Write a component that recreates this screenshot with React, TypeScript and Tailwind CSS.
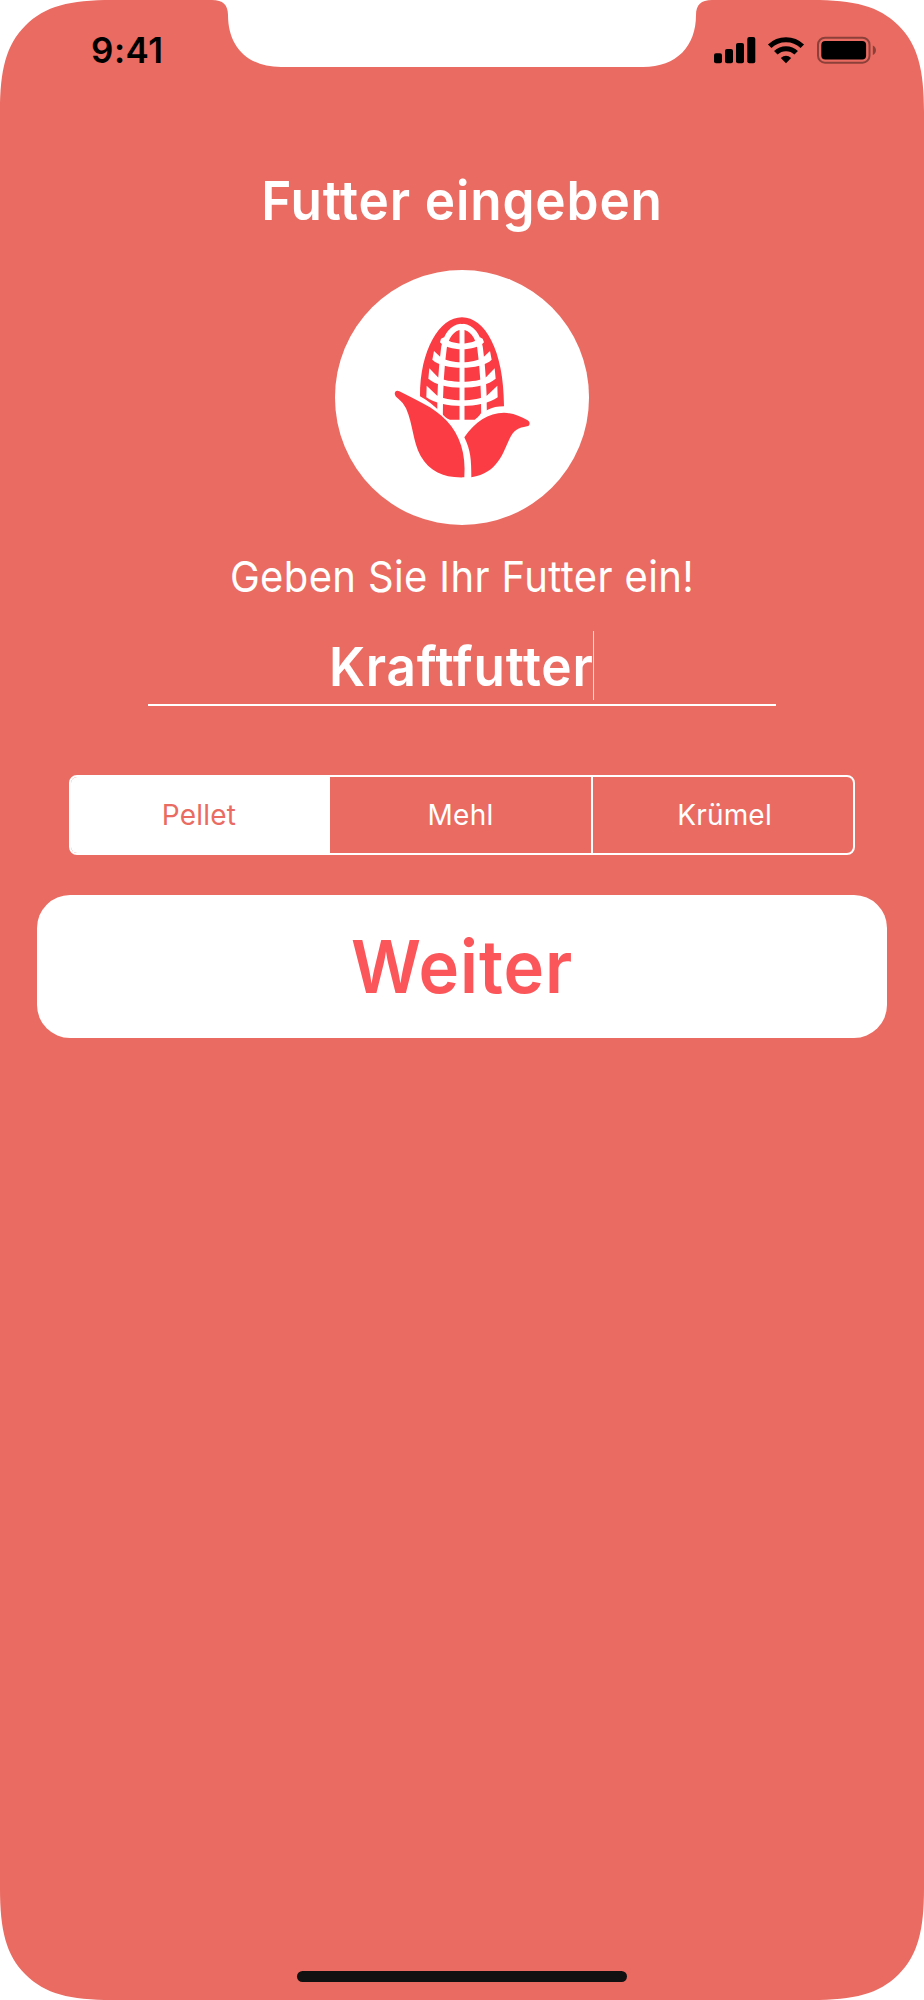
import React, { useState } from "react";

const feedTypes = ["Pellet", "Mehl", "Krümel"];

function ScreenEdges() {
  return (
    <svg
      className="absolute inset-0 pointer-events-none"
      width="924"
      height="2000"
      viewBox="0 0 924 2000"
      fill="#fff"
      aria-hidden="true"
    >
      <path d="M0 0H112C70 0 45 6 25.500 25.500C6 45 0 70 0 112Z" />
      <path d="M924 0H812C854 0 879 6 898.500 25.500C918 45 924 70 924 112Z" />
      <path d="M0 2000H112C70 2000 45 1994 25.500 1974.500C6 1955 0 1930 0 1888Z" />
      <path d="M924 2000H812C854 2000 879 1994 898.500 1974.500C918 1955 924 1930 924 1888Z" />
      <path d="M212 0C223 0 228 5 228 15C228 46 247 67 281 67H643C677 67 696 46 696 15C696 5 701 0 712 0Z" />
    </svg>
  );
}

function StatusBar() {
  return (
    <div className="relative flex h-[100px] justify-between pl-[91px] pr-[47px]">
      <span className="mt-[29px] text-[35px] leading-[42px] font-semibold tracking-[0.5px] text-black">
        9:41
      </span>
      <svg className="mt-9" width="163" height="28" viewBox="0 0 163 28">
        <rect x="0" y="17.3" width="8" height="10" rx="2" />
        <rect x="11" y="13" width="8" height="14.3" rx="2" />
        <rect x="22" y="7" width="8" height="20.3" rx="2" />
        <rect x="33.3" y="1" width="8" height="26.3" rx="2" />
        <g fill="none" stroke="#000" strokeWidth="5">
          <path d="M55.700 10.200A23.500 23.500 0 0 1 88.300 10.200" />
          <path d="M61.800 16.800A14.600 14.600 0 0 1 82.200 16.800" />
        </g>
        <path d="M66.800 22.100Q72 17.500 77.200 22.100L72 27.300Z" />
        <rect
          x="104"
          y="1.7"
          width="51.5"
          height="25"
          rx="7"
          fill="none"
          stroke="#000"
          strokeOpacity="0.4"
          strokeWidth="2"
        />
        <rect x="107.3" y="5" width="44.8" height="18.6" rx="4" />
        <path d="M158.800 9.500C163 11 163 17.500 158.800 19Z" fillOpacity="0.4" />
      </svg>
    </div>
  );
}

function CornIcon() {
  return (
    <svg width="254" height="255" viewBox="0 0 762 765">
      <g transform="translate(135 90)" fill="#fb3c44">
        <path d="M120 289C120 150 178 52 246 52C314 52 372 150 372 319C352 319 338 322 322 330L303 340C296 350 290 355 284 359H210C200 356 192 348 186 341C164 318 142 300 120 289Z" />
        {/* kernel columns */}
        <g fill="none" stroke="#fff" strokeWidth="17">
          <path d="M246 72V362" strokeWidth="15" />
          <path d="M243 80C217 84 200 104 192 142C184 200 180 260 180 348" />
          <path d="M249 80C275 84 292 104 300 142C308 200 312 260 312 340" />
        </g>
        {/* kernel rows */}
        <g fill="#fff">
          <path d="M180 127C205 155 287 155 312 127L308 116L300 112C280 137 212 137 192 112L183 116Z" />
          <path d="M157 179C190 211 302 211 335 179L330 153L310 172C280 192 212 192 182 172L162 153Z" />
          <path d="M145 236C185 272 307 272 347 236L344 205L318 232C290 250 202 250 174 232L148 205Z" />
          <path d="M139 292C185 327 307 327 353 292L352 257L322 286C290 306 202 306 170 286L140 257Z" />
        </g>
        <path d="M58 274C110 302 160 320 200 362C240 405 258 460 253 532C190 534 150 515 122 468C98 425 100 375 78 325C70 308 60 300 48 290C40 280 46 268 58 274Z" />
        <path d="M253 412C285 365 325 338 372 338C400 340 420 348 443 361C452 366 450 378 441 379C415 384 402 388 388 418C370 455 355 520 274 532C274 480 272 450 253 412Z" />
      </g>
    </svg>
  );
}

export default function App() {
  const [selected, setSelected] = useState("Pellet");

  return (
    <main className="relative flex h-[2000px] w-[924px] flex-col overflow-hidden bg-[#ea6b61] font-['Inter',sans-serif] text-white">
      <ScreenEdges />
      <StatusBar />

      <h1 className="mt-[68px] scale-x-95 text-center text-[54px] leading-[66px] font-semibold tracking-[0.9px]">
        Futter eingeben
      </h1>

      <div className="mx-auto mt-9 h-[255px] w-[254px] rounded-full bg-white">
        <CornIcon />
      </div>

      <p className="mt-[25px] scale-x-[0.93] text-center text-[43px] leading-[52px] tracking-[0.4px]">
        Geben Sie Ihr Futter ein!
      </p>

      <div className="mx-auto mt-[29px] flex h-[75px] w-[628px] justify-center border-b-2 border-white">
        <span className="h-[69px] scale-x-95 border-r border-white/80 pt-[3px] text-[54px] leading-[66px] font-semibold tracking-[0.8px]">
          Kraftfutter
        </span>
      </div>

      <div className="mx-auto mt-[69px] grid h-20 w-[786px] grid-cols-[259px_263px_1fr] divide-x-2 divide-white overflow-hidden rounded-lg border-2 border-white">
        {feedTypes.map((type) => (
          <button
            key={type}
            onClick={() => setSelected(type)}
            className={`text-[28px] tracking-[0.2px] first:pr-px last:pl-[3px] ${
              selected === type ? "bg-white text-[#ea6b61]" : "text-white"
            }`}
          >
            {type}
          </button>
        ))}
      </div>

      <button className="mx-auto mt-10 h-[143px] w-[850px] rounded-[33px] bg-white text-[73px] font-semibold text-[#fb5659]">
        <span className="inline-block scale-x-[0.94] tracking-[1px]">
          Weiter
        </span>
      </button>

      <div className="mx-auto mt-auto mb-[18px] h-[11px] w-[330px] rounded-full bg-[#111]" />
    </main>
  );
}
